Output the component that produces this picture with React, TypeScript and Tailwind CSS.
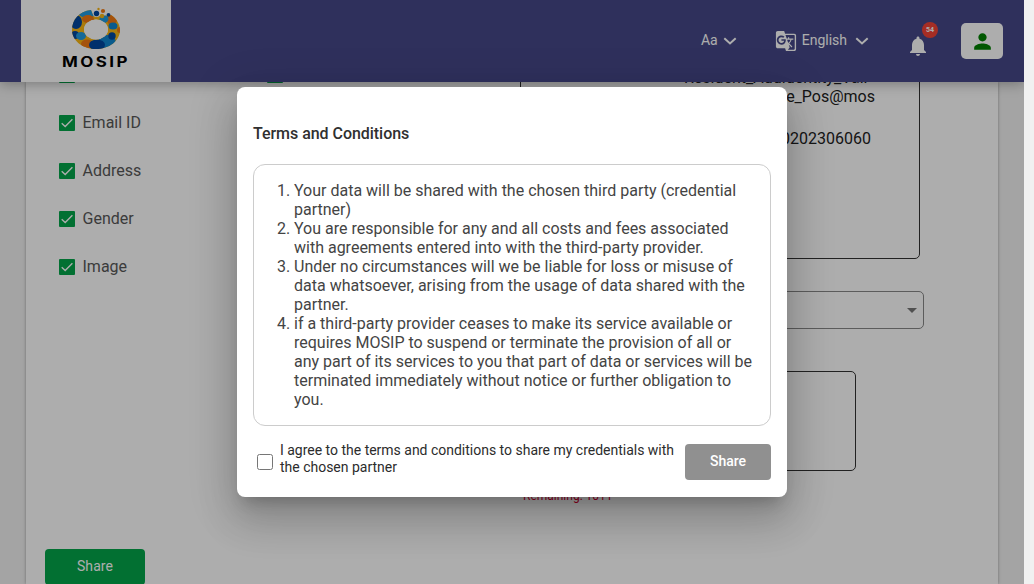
import React from "react";
import { MdPerson, MdNotifications, MdGTranslate } from "react-icons/md";

function Logo() {
  return (
    <div className="flex h-[82px] w-[150px] shrink-0 flex-col items-center bg-white pt-[7px]">
      <svg width="50" height="43" viewBox="0 0 50 43" className="shrink-0">
        <defs>
          <clipPath id="ring">
            <path
              clipRule="evenodd"
              d="M20 3 C8 4 1 13 1 23 C1 34 12 42 25 42 C38 42 49 34 49 23 C49 17 45 11 40 8 L30 9 L22 8 Z M25 12.500 A12 10 0 0 1 25 32.500 A12 10 0 0 1 25 12.500 Z"
            />
          </clipPath>
        </defs>
        <g clipPath="url(#ring)">
          <rect width="50" height="43" fill="#f9b714" />
          <ellipse cx="16" cy="5" rx="9" ry="6" fill="#1f9be0" />
          <ellipse cx="5" cy="15" rx="6" ry="7" fill="#0047a0" />
          <ellipse cx="17" cy="12" rx="6" ry="4" fill="#f27a12" />
          <circle cx="4" cy="28" r="4" fill="#0047a0" />
          <ellipse cx="10" cy="29" rx="5" ry="4" fill="#1f9be0" />
          <ellipse cx="16" cy="37" rx="6" ry="4.500" fill="#f27a12" />
          <ellipse cx="36" cy="35" rx="9" ry="7" fill="#0f86d0" />
          <ellipse cx="26" cy="38" rx="8" ry="5.500" fill="#0047a0" />
          <circle cx="41" cy="29" r="3.700" fill="#0047a0" />
          <ellipse cx="41" cy="13" rx="5" ry="5" fill="#f27a12" />
          <ellipse cx="33" cy="12" rx="4.500" ry="4" fill="#1f9be0" />
          <ellipse cx="42" cy="19" rx="4.500" ry="3.500" fill="#0f86d0" />
          <circle cx="49" cy="23" r="3" fill="#f27a12" />
        </g>
        <ellipse cx="25" cy="22.500" rx="12" ry="10" fill="#fff" />
        <circle cx="25.500" cy="6.500" r="3.600" fill="#fff" />
        <circle cx="25.500" cy="6.500" r="2.700" fill="#0047a0" />
        <circle cx="31" cy="9" r="2.200" fill="#f9b714" />
        <circle cx="32" cy="4" r="2.100" fill="#f27a12" />
        <circle cx="27.500" cy="2" r="1.200" fill="#f9b714" />
        <circle cx="37.500" cy="7.800" r="1.900" fill="#0047a0" />
      </svg>
      <span className="mt-[4px] origin-center scale-x-[1.21] font-['Inter'] text-[14px] leading-[16px] font-bold tracking-[2px] text-black">
        MOSIP
      </span>
    </div>
  );
}

function Chevron() {
  return (
    <svg width="14" height="8" viewBox="0 0 14 8" fill="none">
      <path d="M1.300 1.200 L7 6.500 L12.700 1.200" stroke="#fff" strokeWidth="2" />
    </svg>
  );
}

function Header() {
  return (
    <header className="relative z-10 flex h-[82px] shrink-0 bg-[#464888] pl-[21px] text-white shadow-[0_2px_12px_rgba(0,0,0,0.3)]">
      <Logo />
      <div className="flex flex-1 items-center pr-[21px]">
        <div className="-mt-[1px] ml-auto flex items-center gap-[5px] text-[14px]">
          <span>Aa</span>
          <Chevron />
        </div>
        <div className="-mt-[1px] ml-[38px] flex items-center text-[14px]">
          <MdGTranslate className="mt-[1px] size-[22px]" />
          <span className="ml-[5px]">English</span>
          <span className="ml-[8px]">
            <Chevron />
          </span>
        </div>
        <div className="relative mt-[10px] ml-[37px]">
          <MdNotifications className="size-6" />
          <span className="absolute -top-[12px] left-[16px] flex size-4 items-center justify-center rounded-full bg-[#f44336] text-[7px] font-bold">
            54
          </span>
        </div>
        <div className="ml-[31px] flex h-9 w-[42px] items-center justify-center rounded-[5px] bg-white">
          <MdPerson className="size-[25px] text-[#008000]" />
        </div>
      </div>
    </header>
  );
}

function CheckedRow({ label }: { label?: string }) {
  return (
    <div className="flex h-12 items-center gap-[7.5px]">
      <span className="flex size-4 items-center justify-center rounded-[1px] bg-[#03a64a]">
        <svg width="16" height="16" viewBox="0 0 16 16" fill="none">
          <path d="M2.700 8.300 L6.200 11.600 L13.400 4.300" stroke="#fff" strokeWidth="1.400" />
        </svg>
      </span>
      <span className="text-[16px] text-[#585858]">{label}</span>
    </div>
  );
}

function Page() {
  return (
    <main className="flex flex-1 overflow-hidden bg-[#f2f2f2] px-[26px]">
      <div className="flex h-[502px] w-[972px] bg-white shadow-[0_0_3px_rgba(0,0,0,0.35)]">
        <div className="flex w-[241px] flex-col pl-[33px]">
          <div className="-mt-[31px]">
            <CheckedRow label="" />
            <CheckedRow label="Email ID" />
            <CheckedRow label="Address" />
            <CheckedRow label="Gender" />
            <CheckedRow label="Image" />
          </div>
          <button className="mt-[258px] -ml-[14px] h-9 w-[100px] shrink-0 rounded-[4px] bg-[#03a64a] pb-[2px] text-[14px] tracking-[0.1px] text-white">
            Share
          </button>
        </div>
        <div className="-mt-[31px] w-[253px]">
          <CheckedRow />
        </div>
        <div className="flex flex-col">
          <div className="-mt-[17px] h-[194px] w-[400px] rounded-[5px] border border-[#333] pt-[2px] pl-[163px] text-[16px] text-[#222]">
            <div className="w-[200px] leading-[19px]">
              <p>Resident_Addidentity_Vali</p>
              <p className="w-[191px] text-right">date_Pos@mos</p>
              <p className="mt-[23px] w-[187px] text-right">0202306060</p>
            </div>
          </div>
          <div className="mt-[32px] flex h-[38px] w-[404px] items-center justify-end rounded-[5px] border border-[#888] pr-[6px]">
            <svg width="10" height="5" viewBox="0 0 10 5">
              <path d="M0 0 H10 L5 5 Z" fill="#777" />
            </svg>
          </div>
          <div className="mt-[42px] h-[100px] w-[336px] rounded-[5px] border border-[#333]" />
          <p className="mt-[17px] ml-[3px] text-[12px] leading-[16px] text-[#dc0032]">Remaining: 1011</p>
        </div>
      </div>
    </main>
  );
}

const TERMS: string[][] = [
  ["Your data will be shared with the chosen third party (credential", "partner)"],
  ["You are responsible for any and all costs and fees associated", "with agreements entered into with the third-party provider."],
  [
    "Under no circumstances will we be liable for loss or misuse of",
    "data whatsoever, arising from the usage of data shared with the",
    "partner.",
  ],
  [
    "if a third-party provider ceases to make its service available or",
    "requires MOSIP to suspend or terminate the provision of all or",
    "any part of its services to you that part of data or services will be",
    "terminated immediately without notice or further obligation to",
    "you.",
  ],
];

function TermsDialog() {
  return (
    <div className="flex h-[410px] w-[550px] flex-col rounded-[8px] bg-white px-4 shadow-[0_11px_15px_-7px_rgba(0,0,0,0.2),0_24px_38px_3px_rgba(0,0,0,0.14),0_9px_46px_8px_rgba(0,0,0,0.12)]">
      <h2 className="mt-[37px] text-[16px] leading-[20px] font-medium tracking-[-0.04px] text-[#303030]">Terms and Conditions</h2>
      <ol className="mt-[20px] h-[262px] shrink-0 rounded-[12px] border border-[#ccc] pt-[16px] pl-[23px] text-[16px] leading-[19px] text-[#444]">
        {TERMS.map((lines, i) => (
          <li key={i} className="flex whitespace-nowrap">
            <span className="w-[17px] shrink-0">{i + 1}.</span>
            <span>
              {lines.map((line) => (
                <span key={line} className="block">
                  {line}
                </span>
              ))}
            </span>
          </li>
        ))}
      </ol>
      <div className="mt-[16px] flex">
        <span className="mt-[12px] ml-[4px] size-4 shrink-0 rounded-[2.500px] border border-[#767676]" />
        <p className="ml-[7px] w-[405px] shrink-0 text-[14px] leading-[17px] tracking-[-0.01px] text-[#2c2c2c]">
          I agree to the terms and conditions to share my credentials with
          <br />
          the chosen partner
        </p>
        <button className="mt-[2px] h-9 w-[86px] shrink-0 rounded-[4px] bg-[#909090] pb-[2px] text-[14px] font-medium text-white">
          Share
        </button>
      </div>
    </div>
  );
}

export default function App() {
  return (
    <div className="flex h-[584px] w-[1034px] overflow-hidden bg-[#f1f1f1] font-['Roboto',sans-serif]">
      <div className="relative flex w-[1024px] flex-col overflow-hidden">
        <Header />
        <Page />
        <div className="absolute inset-0 z-20 flex items-start justify-center bg-black/32 pt-[87px]">
          <TermsDialog />
        </div>
      </div>
    </div>
  );
}
